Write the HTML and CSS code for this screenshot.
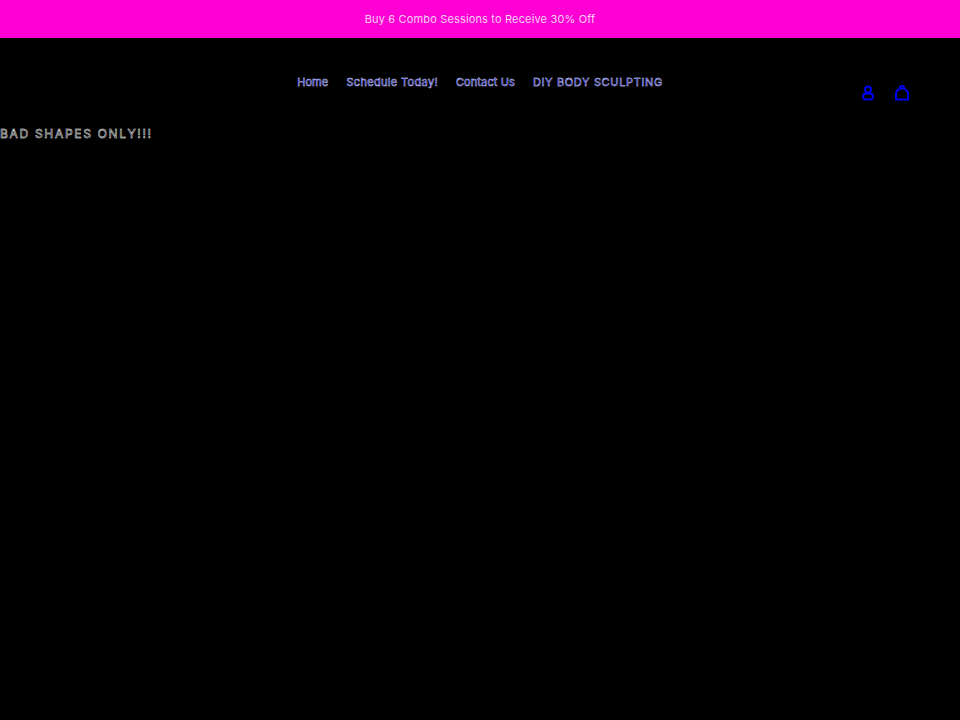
FILE: index.html
```html
<!DOCTYPE html>
<html lang="en">
<head>
<meta charset="utf-8">
<title>Shop</title>
<link rel="stylesheet" href="styles.css">
</head>
<body>
<div class="announce"><p class="announce-text">Buy 6 Combo Sessions to Receive 30% Off</p></div>
<header class="header">
  <div class="header-side"></div>
  <nav class="nav">
    <a class="nav-link" href="#">Home</a>
    <a class="nav-link nav-sched" href="#">Schedule Today!</a>
    <a class="nav-link" href="#">Contact Us</a>
    <a class="nav-link nav-wide" href="#">DIY BODY SCULPTING</a>
  </nav>
  <div class="header-side icons">
    <svg class="icon" viewBox="0 0 14 16" width="14" height="16" aria-hidden="true"><circle cx="7" cy="4.500" r="3"/><rect x="2" y="8.500" width="10" height="6" rx="3"/></svg>
    <svg class="icon" viewBox="0 0 16 16" width="16" height="16" aria-hidden="true"><path d="M6 3.500V3a2 2 0 0 1 4 0v.5"/><path d="M2 14.500V8.500C2 5.500 5 3.500 8 3.500s6 2 6 5v6z"/></svg>
  </div>
</header>
<main class="main"><p class="tagline">BAD SHAPES ONLY!!!</p></main>
</body>
</html>
```
FILE: styles.css
```css
* { box-sizing: border-box; }
html, body { margin: 0; height: 100%; background: #000; }
body { font-family: Inter, "Liberation Sans", Arial, sans-serif; overflow: hidden; }
.announce { height: 38px; background: #ff00d4; display: flex; align-items: center; justify-content: center; padding-bottom: 1px; }
.announce-text { margin: 0; font-size: 11px; letter-spacing: 0.16px; color: #fcd0f5; }
.header { display: grid; grid-template-columns: 1fr auto 1fr; height: 82px; }
.nav { display: flex; gap: 18px; padding-top: 37px; align-items: flex-start; }
.nav-link { font-size: 11px; line-height: 14px; letter-spacing: 0.1px; color: #0000c0; text-decoration: none; -webkit-text-stroke: 0.4px #e4e4ff; white-space: nowrap; }
.nav-sched { letter-spacing: 0.33px; }
.nav-wide { letter-spacing: 0.65px; }
.icons { display: flex; justify-content: flex-end; gap: 19px; padding: 47px 50px 0 0; align-items: flex-start; }
.icon { fill: none; stroke: #0000f0; stroke-width: 2; }
.tagline { margin: 7px 0 0; font-size: 12px; line-height: 14px; letter-spacing: 1.7px; color: #000; -webkit-text-stroke: 0.45px #fff; white-space: nowrap; }
```
